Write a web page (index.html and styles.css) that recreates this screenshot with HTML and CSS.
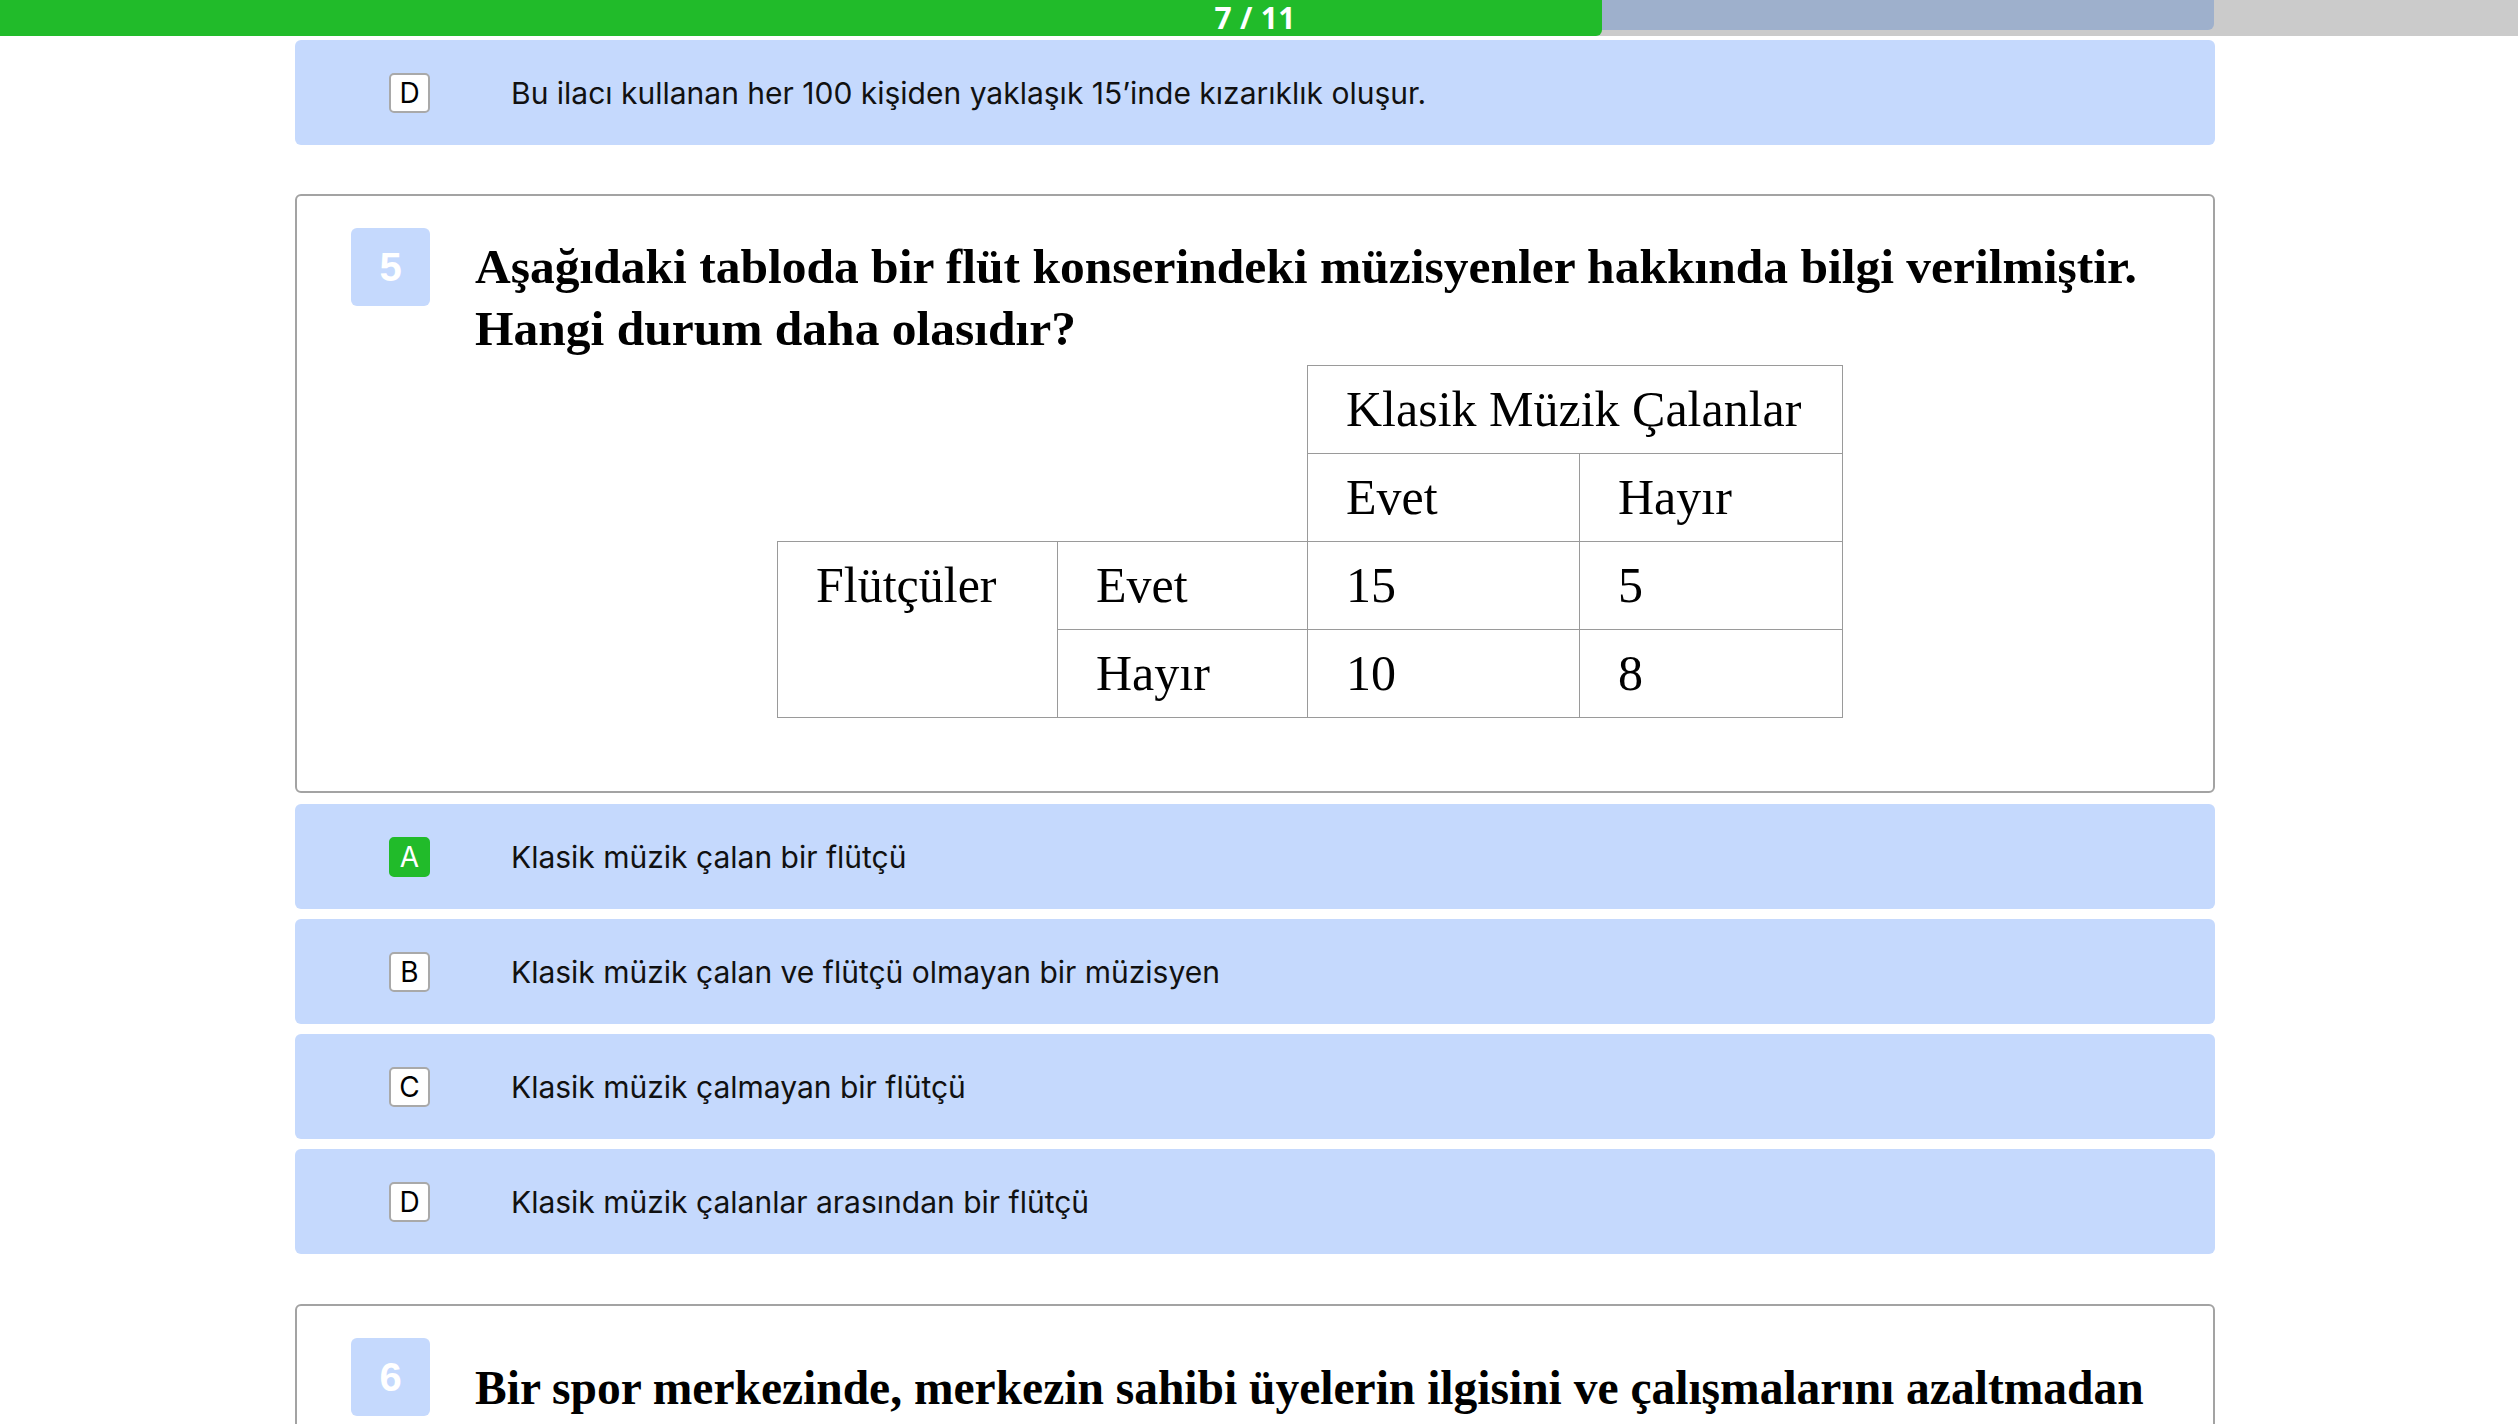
FILE: index.html
```html
<!DOCTYPE html>
<html lang="tr">
<head>
<meta charset="utf-8">
<title>Soru 5</title>
<link rel="stylesheet" href="styles.css">
</head>
<body>
<header class="progress">
  <div class="progress-track"></div>
  <div class="progress-fill" style="width: 63.64%"></div>
  <div class="progress-inner">
    <span class="progress-label">7 / 11</span>
  </div>
</header>

<main class="page">
  <div class="option">
    <span class="opt-key">D</span>
    <span class="opt-text">Bu ilacı kullanan her 100 kişiden yaklaşık 15’inde kızarıklık oluşur.</span>
  </div>

  <section class="question">
    <div class="q-num">5</div>
    <div class="q-body">
      <p class="q-text">Aşağıdaki tabloda bir flüt konserindeki müzisyenler hakkında bilgi verilmiştir.<br>Hangi durum daha olasıdır?</p>
      <table class="data">
        <colgroup>
          <col class="c1"><col class="c2"><col class="c3"><col class="c4">
        </colgroup>
        <tr>
          <td class="blank" colspan="2" rowspan="2"></td>
          <td colspan="2">Klasik Müzik Çalanlar</td>
        </tr>
        <tr>
          <td>Evet</td>
          <td>Hayır</td>
        </tr>
        <tr>
          <td rowspan="2">Flütçüler</td>
          <td>Evet</td>
          <td>15</td>
          <td>5</td>
        </tr>
        <tr>
          <td>Hayır</td>
          <td>10</td>
          <td>8</td>
        </tr>
      </table>
    </div>
  </section>

  <div class="options">
    <div class="option">
      <span class="opt-key selected">A</span>
      <span class="opt-text">Klasik müzik çalan bir flütçü</span>
    </div>
    <div class="option">
      <span class="opt-key">B</span>
      <span class="opt-text">Klasik müzik çalan ve flütçü olmayan bir müzisyen</span>
    </div>
    <div class="option">
      <span class="opt-key">C</span>
      <span class="opt-text">Klasik müzik çalmayan bir flütçü</span>
    </div>
    <div class="option">
      <span class="opt-key">D</span>
      <span class="opt-text">Klasik müzik çalanlar arasından bir flütçü</span>
    </div>
  </div>

  <section class="question next">
    <div class="q-num">6</div>
    <div class="q-body">
      <p class="q-text">Bir spor merkezinde, merkezin sahibi üyelerin ilgisini ve çalışmalarını azaltmadan</p>
    </div>
  </section>
</main>
</body>
</html>
```

FILE: styles.css
```css
html, body {
  margin: 0;
  padding: 0;
  background: #ffffff;
}

body {
  font-family: Inter, "Noto Sans", sans-serif;
  color: #111;
}

/* progress header */
.progress {
  position: relative;
  height: 36px;
  background: #cbcbcb;
}

.progress-track {
  position: absolute;
  left: 0;
  top: 0;
  height: 30px;
  width: calc(50% + 955px);
  background: #9eb0cc;
  border-bottom-right-radius: 6px;
}

.progress-fill {
  position: absolute;
  left: 0;
  top: 0;
  height: 36px;
  background: #21bb2a;
  border-bottom-right-radius: 6px;
}

.progress-inner {
  position: relative;
  width: 1920px;
  margin-left: calc(50% - 964px);
  height: 36px;
  display: flex;
  justify-content: center;
  align-items: center;
}

.progress-label {
  font-family: "Open Sans", sans-serif;
  font-weight: 700;
  font-size: 30px;
  line-height: 36px;
  color: #ffffff;
  letter-spacing: 0.3px;
}

/* page column */
.page {
  width: 1920px;
  margin-left: calc(50% - 964px);
  padding-top: 4px;
}

/* options */
.options {
  display: flex;
  flex-direction: column;
  gap: 10px;
  margin-top: 11px;
}

.option {
  display: flex;
  align-items: center;
  height: 105px;
  box-sizing: border-box;
  padding-left: 94px;
  background: #c5d9fd;
  border-radius: 6px;
}

.opt-key {
  width: 41px;
  height: 40px;
  box-sizing: border-box;
  display: flex;
  align-items: center;
  justify-content: center;
  background: #ffffff;
  border: 2px solid #a9a9a9;
  border-radius: 5px;
  font-family: Inter, sans-serif;
  font-size: 28px;
  color: #000;
}

.opt-key.selected {
  background: #21bb2a;
  border-color: #21bb2a;
  color: #ffffff;
}

.opt-text {
  margin-left: 81px;
  font-family: Inter, sans-serif;
  font-size: 30px;
  color: #111;
}

/* question box */
.question {
  display: flex;
  align-items: flex-start;
  margin-top: 49px;
  box-sizing: border-box;
  border: 2px solid #a3a3a3;
  border-radius: 6px;
  padding: 32px 54px 73px 54px;
}

.question.next {
  margin-top: 50px;
  padding-bottom: 60px;
}

.q-num {
  flex: 0 0 auto;
  width: 79px;
  height: 78px;
  display: flex;
  align-items: center;
  justify-content: center;
  background: #c5d9fd;
  border-radius: 6px;
  font-family: "Liberation Sans", Arial, sans-serif;
  font-weight: 700;
  font-size: 40px;
  color: #ffffff;
}

.q-body {
  flex: 1 1 auto;
  margin-left: 45px;
  display: flex;
  flex-direction: column;
  align-items: center;
}

.q-text {
  align-self: stretch;
  margin: 0;
  padding-top: 8px;
  font-family: "Liberation Serif", "Times New Roman", serif;
  font-weight: 700;
  font-size: 49.5px;
  line-height: 62px;
  color: #000;
  white-space: nowrap;
}

.question.next .q-text {
  padding-top: 19px;
  font-size: 47.5px;
}

/* data table */
.data {
  margin-top: 5px;
  margin-left: -14px;
  border-collapse: collapse;
  table-layout: fixed;
  width: 1065px;
  font-family: "Liberation Serif", "Times New Roman", serif;
  font-size: 50px;
  color: #000;
}

.data .c1 { width: 280px; }
.data .c2 { width: 250px; }
.data .c3 { width: 272px; }
.data .c4 { width: 263px; }

.data td {
  border: 1px solid #9a9a9a;
  padding: 0 0 0 38px;
  height: 87px;
  line-height: 87px;
  vertical-align: top;
  text-align: left;
  white-space: nowrap;
}

.data td.blank {
  border: none;
}
```
